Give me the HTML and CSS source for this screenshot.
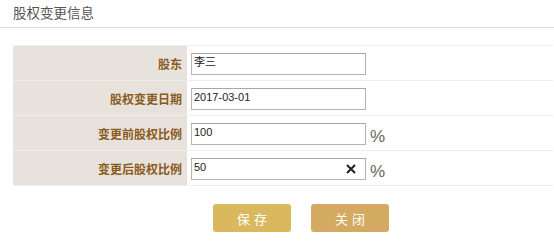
FILE: index.html
```html
<!DOCTYPE html>
<html lang="zh-CN">
<head>
<meta charset="utf-8">
<link rel="stylesheet" href="styles.css">
</head>
<body>
<div class="header">股权变更信息</div>
<div class="form">
  <div class="row">
    <div class="label">股东</div>
    <div class="field"><div class="input">李三</div></div>
  </div>
  <div class="row">
    <div class="label">股权变更日期</div>
    <div class="field"><div class="input">2017-03-01</div></div>
  </div>
  <div class="row">
    <div class="label">变更前股权比例</div>
    <div class="field"><div class="input">100</div><span class="pct">%</span></div>
  </div>
  <div class="row">
    <div class="label">变更后股权比例</div>
    <div class="field">
      <div class="input has-clear">50
        <svg class="clear" width="10" height="10" viewBox="0 0 10 10"><path d="M1 1L9 9M9 1L1 9" stroke="#222" stroke-width="2" stroke-linecap="butt"/></svg>
      </div><span class="pct">%</span>
    </div>
  </div>
</div>
<div class="actions">
  <button class="btn save">保存</button>
  <button class="btn close">关闭</button>
</div>
</body>
</html>
```
FILE: styles.css
```css
html, body {
  margin: 0;
  padding: 0;
  background: #fff;
  font-family: "Noto Sans CJK SC", "Liberation Sans", sans-serif;
}
.header {
  height: 27px;
  line-height: 25px;
  padding-left: 13px;
  font-size: 13.5px;
  color: #555;
  border-bottom: 1px solid #dcdcdc;
}
.form {
  margin: 17px 0 0 13px;
  width: 540px;
  border-bottom: 1px solid #f0eeeb;
}
.row {
  display: flex;
  height: 34px;
  border-top: 1px solid #f0eeeb;
}
.label {
  width: 169px;
  padding-right: 5px;
  background: #e8e2dc;
  color: #8a5a1c;
  font-weight: bold;
  font-size: 12px;
  display: flex;
  align-items: center;
  justify-content: flex-end;
}
.field {
  display: flex;
  align-items: center;
  padding-left: 4px;
  padding-top: 2px;
}
.input {
  position: relative;
  box-sizing: border-box;
  width: 175px;
  height: 22px;
  border: 1px solid #b4b4b4;
  border-top-color: #a8a8a8;
  padding: 1px 0 0 2px;
  font-family: "Liberation Sans", "Noto Sans CJK SC", sans-serif;
  font-size: 11px;
  line-height: 14px;
  color: #222;
}
.clear {
  position: absolute;
  right: 9px;
  top: 5px;
}
.pct {
  margin-left: 4px;
  font-family: "Liberation Sans", sans-serif;
  font-size: 17px;
  color: #666;
  padding-top: 6px;
}
.actions {
  display: flex;
  gap: 20px;
  padding-left: 213px;
  margin-top: 18px;
}
.btn {
  width: 78px;
  height: 28px;
  border: none;
  border-radius: 3px;
  color: #fff;
  font-family: "Noto Sans CJK SC", sans-serif;
  font-size: 13px;
  letter-spacing: 4px;
  padding: 0 0 0 4px;
}
.save { background: #d9b85e; }
.close { background: #d4aa62; }
```
